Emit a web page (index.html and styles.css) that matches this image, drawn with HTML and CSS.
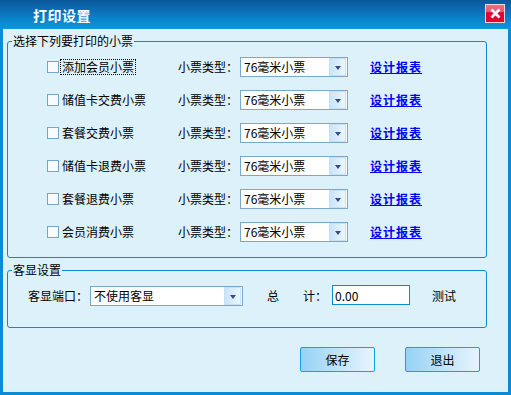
FILE: index.html
```html
<!DOCTYPE html>
<html lang="zh-CN">

<head>
    <meta charset="UTF-8" />
    <meta name="viewport" content="width=device-width, initial-scale=1.0" />
    <title>打印设置</title>
    <link rel="stylesheet" href="styles.css">
</head>

<body>
    <div class="window">
        <div class="titlebar">
            <span class="title">打印设置</span>
            <button type="button" class="close">
                <svg width="11" height="11" viewBox="0 0 11 11">
                    <path d="M1.5 1.5 L9.5 9.5 M9.5 1.5 L1.5 9.5" stroke="#fff" stroke-width="2.6" />
                </svg>
            </button>
        </div>

        <div class="client">
            <fieldset class="group">
                <legend>选择下列要打印的小票</legend>
                <div class="tickets">
                    <div class="row">
                        <label class="check"><span class="box"></span><span class="name focus">添加会员小票</span></label>
                        <span class="type-label">小票类型：</span>
                        <div class="select"><span class="value">76毫米小票</span><span class="drop"></span></div>
                        <a href="#" class="design">设计报表</a>
                    </div>
                    <div class="row">
                        <label class="check"><span class="box"></span><span class="name">储值卡交费小票</span></label>
                        <span class="type-label">小票类型：</span>
                        <div class="select"><span class="value">76毫米小票</span><span class="drop"></span></div>
                        <a href="#" class="design">设计报表</a>
                    </div>
                    <div class="row">
                        <label class="check"><span class="box"></span><span class="name">套餐交费小票</span></label>
                        <span class="type-label">小票类型：</span>
                        <div class="select"><span class="value">76毫米小票</span><span class="drop"></span></div>
                        <a href="#" class="design">设计报表</a>
                    </div>
                    <div class="row">
                        <label class="check"><span class="box"></span><span class="name">储值卡退费小票</span></label>
                        <span class="type-label">小票类型：</span>
                        <div class="select"><span class="value">76毫米小票</span><span class="drop"></span></div>
                        <a href="#" class="design">设计报表</a>
                    </div>
                    <div class="row">
                        <label class="check"><span class="box"></span><span class="name">套餐退费小票</span></label>
                        <span class="type-label">小票类型：</span>
                        <div class="select"><span class="value">76毫米小票</span><span class="drop"></span></div>
                        <a href="#" class="design">设计报表</a>
                    </div>
                    <div class="row">
                        <label class="check"><span class="box"></span><span class="name">会员消费小票</span></label>
                        <span class="type-label">小票类型：</span>
                        <div class="select"><span class="value">76毫米小票</span><span class="drop"></span></div>
                        <a href="#" class="design">设计报表</a>
                    </div>
                </div>
            </fieldset>

            <fieldset class="group">
                <legend>客显设置</legend>
                <div class="display-row">
                    <span class="port-label">客显端口：</span>
                    <div class="select wide"><span class="value">不使用客显</span><span class="drop"></span></div>
                    <span class="total-a">总</span>
                    <span class="total-b">计：</span>
                    <input type="text" class="total" value="0.00" />
                    <span class="test">测试</span>
                </div>
            </fieldset>

            <div class="actions">
                <button type="button" class="btn">保存</button>
                <button type="button" class="btn">退出</button>
            </div>
        </div>
    </div>
</body>

</html>
```

FILE: styles.css
```css
body {
    margin: 0;
    font-family: "Noto Sans CJK SC", "Liberation Sans", sans-serif;
    font-size: 12px;
    line-height: 16px;
    color: #000;
}

.window {
    width: 511px;
    height: 395px;
    background-color: #ddf1fa;
}

.titlebar {
    height: 29px;
    display: flex;
    align-items: center;
    justify-content: space-between;
    background: linear-gradient(to bottom, #0a569a, #0a7cc4 55%, #0a98de);
}

.title {
    margin-left: 33px;
    color: #fff;
    font-size: 14px;
    font-weight: bold;
    letter-spacing: 0.5px;
}

.close {
    width: 20px;
    height: 19px;
    margin: -3px 6px 0 0;
    padding: 0;
    border: 1px solid #f3d6dc;
    background: linear-gradient(to bottom, #ec6d82 0%, #e8596f 40%, #e8002c 45%, #e4002a 100%);
    display: flex;
    align-items: center;
    justify-content: center;
}

.client {
    height: 366px;
    box-sizing: border-box;
    border: 3px solid #0a8bd6;
    border-top: none;
    padding: 4px 0 0 4px;
}

.group {
    width: 480px;
    box-sizing: border-box;
    margin: 0 0 4px 0;
    border: 1px solid #0b8ad3;
    border-radius: 3px;
    padding: 0;
}

.group legend {
    margin-left: 4px;
    padding: 0 1px;
    line-height: 16px;
}

.tickets {
    padding: 1px 0 9px 39px;
}

.row {
    height: 33px;
    display: flex;
    align-items: center;
}

.check {
    width: 131px;
    display: flex;
    align-items: center;
}

.box {
    width: 10px;
    height: 10px;
    border: 1px solid #73a6c9;
    background-color: #f7fbfd;
}

.name {
    margin-left: 2px;
    padding: 0 1px;
    line-height: 14px;
}

.focus {
    outline: 1px dotted #000;
}

.type-label {
    width: 62px;
}

.select {
    width: 108px;
    height: 20px;
    box-sizing: border-box;
    border: 1px solid #79a8c9;
    background-color: #fff;
    display: flex;
    align-items: center;
    justify-content: space-between;
}

.select.wide {
    width: 153px;
}

.value {
    margin-left: 3px;
}

.drop {
    width: 15px;
    height: 16px;
    margin-right: 1px;
    border: 1px solid #c7e0f3;
    background: linear-gradient(to right, #c9e4f8, #eaf6fd);
    display: flex;
    align-items: center;
    justify-content: center;
}

.drop::after {
    content: "";
    margin-top: 2px;
    border-left: 3px solid transparent;
    border-right: 3px solid transparent;
    border-top: 4px solid #36488a;
}

.design {
    margin-left: 22px;
    color: #0000ff;
    font-weight: bold;
    font-size: 12px;
    letter-spacing: 1px;
}

.display-row {
    height: 20px;
    margin: 8px 0 21px 20px;
    display: flex;
    align-items: center;
}

.port-label {
    width: 62px;
}

.total-a {
    margin-left: 24px;
}

.total-b {
    margin-left: 24px;
}

.total {
    width: 78px;
    height: 20px;
    box-sizing: border-box;
    margin: -2px 0 0 5px;
    padding: 0 2px;
    border: 1px solid #0b8ad3;
    font: inherit;
    background-color: #fff;
}

.test {
    margin-left: 22px;
}

.actions {
    width: 480px;
    margin-top: 19px;
    display: flex;
    justify-content: flex-end;
    gap: 30px;
    padding-right: 7px;
    box-sizing: border-box;
}

.btn {
    width: 75px;
    height: 25px;
    border: 1px solid #14a2e2;
    border-radius: 2px;
    background: linear-gradient(to right, #97d2f6, #e6f5fd);
    font: inherit;
    color: #000;
    padding: 0;
}
```
